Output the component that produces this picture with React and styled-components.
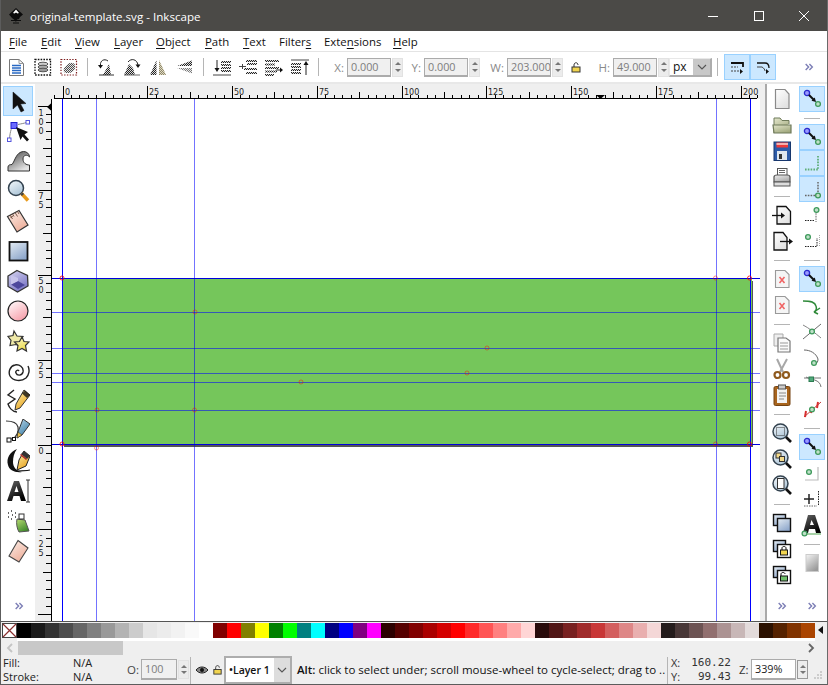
import React from "react";
import styled, { createGlobalStyle } from "styled-components";

const UI = `"Open Sans", "Noto Sans", "Liberation Sans", sans-serif`;

const Global = createGlobalStyle`
  html, body { margin: 0; padding: 0; background: #efefef; }
  #root { width: 828px; height: 685px; overflow: hidden; }
`;

const Window = styled.div`
  width: 828px; height: 685px; box-sizing: border-box; display: flex; flex-direction: column;
  font-family: ${UI}; background: #efefef; color: #111; overflow: hidden;
  border-left: 1px solid #5c5c5c; border-right: 1px solid #6a6a6a; border-bottom: 1px solid #5c5c5c;
`;
const TitleBar = styled.div`
  height: 31px; flex: none; background: #4b4a47; display: flex; align-items: center; color: #fff; padding-left: 7px;
`;
const Title = styled.div`font-size: 11.6px; margin-left: 6px; margin-top: 2px; flex: 1;`;
const WinBtn = styled.div`width: 45.5px; height: 31px; display: flex; align-items: center; justify-content: center;`;
const MenuBar = styled.div`
  height: 21px; flex: none; background: #fff; border-bottom: 1px solid #e4e4e4; box-sizing: border-box;
  display: flex; align-items: center; font-size: 11.4px; padding-left: 8px; color: #111;
`;
const MenuItem = styled.div`width: ${p => p.$w}px; flex: none; u { text-underline-offset: 2px; }`;
const Toolbar = styled.div`
  height: 32px; flex: none; background: #fff; border-bottom: 2px solid #e8e8e8; box-sizing: border-box; display: flex; align-items: center; padding-left: 3px;
`;
const Cell = styled.div`
  width: 26px; height: 26px; flex: none; display: flex; align-items: center; justify-content: center; box-sizing: border-box;
  ${p => p.$on && `background: #cce8ff; border: 1px solid #99d1ff;`}
`;
const VSep = styled.div`
  width: ${p => p.$w}px; flex: none; display: flex; justify-content: center; align-self: center;
  &::after { content: ""; width: 1px; height: 18px; background: #b5b5b5; }
`;
const FieldLabel = styled.div`
  width: ${p => p.$w}px; flex: none; text-align: right; padding-right: 3px; box-sizing: border-box; font-size: 11.5px; color: #8a8a8a;
`;
const NumBox = styled.div`
  width: ${p => p.$w}px; height: ${p => p.$h || 19}px; flex: none; box-sizing: border-box; overflow: hidden; white-space: nowrap;
  background: ${p => p.$white ? "#fff" : "#f0f0f0"}; border: 1px solid #ababab; border-bottom-width: 2px; border-right-width: 1px;
  font-size: 10.8px; color: ${p => p.$white ? "#222" : "#7d7d7d"}; padding-left: 3px; line-height: ${p => (p.$h || 19) - 3}px;
`;
const Spin = styled.div`
  width: 11px; height: 19px; flex: none; margin-left: 1px; background: #ececec; display: flex; flex-direction: column; justify-content: space-around; align-items: center; padding: 2px 0; box-sizing: border-box;
  border: 1px solid ${p => p.$dark ? "#999" : "#e2e2e2"};
`;
const Arrow = styled.div`
  width: 0; height: 0; border-left: 3px solid transparent; border-right: 3px solid transparent;
  ${p => p.$down ? `border-top: 3px solid #777;` : `border-bottom: 3px solid #777;`}
`;
const Gap = styled.div`width: ${p => p.$w}px; flex: none; display: flex; justify-content: center;`;
const Combo = styled.div`
  width: ${p => p.$w}px; height: ${p => p.$h}px; flex: none; box-sizing: border-box; background: #fff; display: flex; align-items: center;
  border: 2px solid #adadad; border-width: ${p => p.$thin ? "1px 2px 2px 1px" : "2px"}; border-color: ${p => p.$thin ? "#e8e8e8 #adadad #adadad #e8e8e8" : "#adadad"};
`;
const ComboText = styled.div`
  flex: 1; padding-left: ${p => p.$pl}px; font-size: ${p => p.$fs}px; font-weight: ${p => p.$b ? 600 : 400}; color: #111; white-space: nowrap;
`;
const ComboDrop = styled.div`
  width: ${p => p.$w}px; align-self: stretch; flex: none; background: ${p => p.$bg}; display: flex; align-items: center; justify-content: center;
`;
const Main = styled.div`height: 537px; flex: none; display: flex;`;
const Toolbox = styled.div`
  width: 34px; flex: none; background: #fff; display: flex; flex-direction: column; padding: 2px 0 0 2px; box-sizing: border-box;
`;
const ToolBtn = styled.div`
  width: 30px; height: 30px; flex: none; box-sizing: border-box; display: flex; align-items: center; justify-content: center;
  ${p => p.$on && `background: #cce8ff; border: 1px solid #99d1ff;`}
`;
const ChevronSlot = styled.div`
  margin-top: auto; height: ${p => p.$h}px; display: flex; align-items: flex-start; justify-content: center; flex: none;
`;
const Workspace = styled.div`width: 730px; flex: none; display: flex; flex-direction: column;`;
const HRuler = styled.svg`width: 730px; height: 15px; flex: none; display: block; background: #efefef;`;
const WorkBody = styled.div`flex: 1; min-height: 0; display: flex;`;
const VRuler = styled.svg`width: 17px; height: 522px; flex: none; display: block; background: #efefef;`;
const Canvas = styled.svg`width: 708px; height: 522px; flex: none; display: block; background: #fff;`;
const Strip = styled.div`width: 5px; flex: none; background: #efefef;`;
const Dock = styled.div`
  flex: 1; background: #fff; border-left: 2px solid #a9a9a9; display: flex; padding-top: 2px; box-sizing: border-box;
`;
const DockCol = styled.div`width: 30px; display: flex; flex-direction: column; align-items: center; flex: none;`;
const HSep = styled.div`
  height: 12px; width: 100%; flex: none; display: flex; align-items: center; justify-content: center;
  &::after { content: ""; width: 16px; height: 1px; background: #b5b5b5; }
`;
const Palette = styled.div`
  height: 20px; flex: none; display: flex; background: #efefef; border-top: 1px solid #555; box-sizing: border-box; padding: 1px 0 0 1px; align-items: flex-start;
`;
const SwatchRow = styled.div`display: flex; width: 798px; border-bottom: 3px solid #fff; flex: none;`;
const Swatch = styled.div`width: 14px; height: 15px; flex: none; background: ${p => p.$c};`;
const NoSwatch = styled.svg`width: 15px; height: 15px; flex: none; display: block;`;
const PalArrow = styled.div`
  margin: 3px 0 0 3px; width: 0; height: 0; border-top: 4px solid transparent; border-bottom: 4px solid transparent; border-right: 5px solid #111;
`;
const ScrollRow = styled.div`height: 14px; flex: none; display: flex; align-items: center; background: #efefef;`;
const ScrollBtn = styled.div`width: ${p => p.$w}px; flex: none; display: flex; justify-content: center;`;
const Thumb = styled.div`width: 105px; height: 14px; flex: none; background: #c8c8c8;`;
const Status = styled.div`height: 29px; flex: none; display: flex; align-items: center; background: #efefef; font-size: 11.5px;`;
const FillGrid = styled.div`
  width: 122px; flex: none; display: grid; grid-template-columns: 70px auto; row-gap: 1px; padding-left: 2px; box-sizing: border-box; line-height: 13px; font-size: 11px; color: #222;
`;
const OLabel = styled.div`width: 14px; flex: none; color: #444; font-size: 11.5px;`;
const StatusSep = styled.div`width: 1px; align-self: stretch; background: #b5b5b5; flex: none; margin: ${p => p.$m};`;
const Hint = styled.div`width: 369px; flex: none; font-size: 11.5px; white-space: nowrap; color: #111; b { font-weight: 600; }`;
const Coords = styled.div`
  width: 68px; flex: none; display: grid; grid-template-columns: 19px auto; line-height: 14px; font-size: 11px; color: #333;
`;
const Mono = styled.div`font-family: "DejaVu Sans Mono", monospace; font-size: 11px; text-align: right; padding-right: 8px;`;
const ZLabel = styled.div`width: 12px; flex: none; font-size: 11.5px; color: #333;`;
const Grip = styled.svg`width: 12px; height: 12px; flex: none; margin: 10px 0 0 4px; display: block;`;
const Ic = styled.svg`display: block; flex: none; width: ${p => p.$s || 24}px; height: ${p => p.$s || 24}px;`;
const Defs = styled.svg`width: 0; height: 0; flex: none; display: block;`;

const Chev = () => (
  <Ic $s={10} viewBox="0 0 12 12" fill="none" stroke="#7d7fb6" strokeWidth="1.7">
    <path d="M2 2.5 5.5 6 2 9.5M6.5 2.5 10 6 6.5 9.5" />
  </Ic>
);

const D = "url(#dith)";
const ringG = (x, y) => <circle cx={x} cy={y} r="2.4" fill="#bfe0c8" stroke="#3f9a5c" strokeWidth="1.3" />;
const ringB = (x, y) => <circle cx={x} cy={y} r="2.6" fill="#9a9aff" stroke="#2a2acc" strokeWidth="1.3" />;
const snapArrow = (
  <>
    {ringB(7, 6)}
    {ringG(18, 17)}
    <path d="M9 8 14 13" stroke="#111" strokeWidth="2" />
    <path d="M16 15 11.5 13.8 14.8 10.5Z" fill="#111" />
  </>
);
const lens = (
  <>
    <circle cx="10.5" cy="10.5" r="7.5" fill="url(#gLens)" stroke="#33424f" strokeWidth="1.5" />
    <path d="M16 16 21 21" stroke="#111" strokeWidth="2.6" />
  </>
);
const stackBack = <rect x="3.5" y="3.5" width="12" height="11" fill="url(#gBlue)" stroke="#111" strokeWidth="1.4" />;

const icons = {
  /* top bar */
  docprops: <><path d="M4.5 4.5H14l4.5 4V20.5h-14Z" fill="#fff" stroke="#777" /><path d="M14 4.500v4h4.500" fill="none" stroke="#999" /><path d="M7 10.500h9M7 13h9M7 15.500h9M7 18h9" stroke="#2869c4" strokeWidth="1.400" /></>,
  group: <><rect x="4" y="4.500" width="15.500" height="15.500" fill="none" stroke="#111" strokeWidth="1.300" strokeDasharray="1.600 1.200" /><ellipse cx="12" cy="9" rx="5" ry="1.800" fill="#ccc" stroke="#555" /><ellipse cx="12" cy="12" rx="5" ry="1.800" fill="#aaa" stroke="#555" /><ellipse cx="12" cy="15" rx="5" ry="1.800" fill="#999" stroke="#555" /></>,
  selall: <><rect x="4" y="4.500" width="15.500" height="15.500" fill="none" stroke="#7c1c1c" strokeWidth="1.200" strokeDasharray="1.400 1.400" /><path d="M7 17c-1-4 1-5 3-7 2-3 7-3 8 0 1 4-2 8-6 8-2 0-4 0-5-1Z" fill={D} opacity=".8" /></>,
  rotl: <><path d="M9 20 15 9l2 11Z" fill={D} /><path d="M5 20h15" stroke="#333" strokeWidth="1" /><path d="M14 6C10 3 6 6 6.500 10" fill="none" stroke="#222" strokeWidth="1" /><path d="M4 10h5l-2.500 3.500Z" fill="#111" /></>,
  rotr: <><path d="M4 20 9 9l4 4 2 7Z" fill={D} /><path d="M4 20h16" stroke="#666" /><path d="M8 7c3-4 9-3 10 3" fill="none" stroke="#222" strokeWidth="1" /><path d="M15.500 9.500h5L18 13Z" fill="#111" /></>,
  fliph: <><path d="M10.500 5v15H4Z" fill={D} /><path d="M13 5v15h7Z" fill="#e2d7a8" /><path d="M13 5v15h7Z" fill={D} opacity=".45" /></>,
  flipv: <><path d="M20 5.500V11H5Z" fill={D} /><path d="M20 18.500V13H5Z" fill={D} opacity=".6" /></>,
  al1: <><path d="M11 7h10M11 10h10M11 13h10M11 16h10" stroke={D} strokeWidth="2" /><path d="M7 5v9" stroke="#222" /><path d="M4.500 13h5L7 17Z" fill="#111" /><path d="M3 20h18" stroke="#444" /></>,
  al2: <><path d="M10 6h11M11 9h10M8 14h13M10 18h11" stroke={D} strokeWidth="2.200" /><path d="M3 11.500h7M6.500 9v5" stroke="#444" /></>,
  al3: <><path d="M3 6h14M3 9.500h10M3 13h14M3 16.500h12M3 20h9" stroke={D} strokeWidth="2" /><path d="M14 15h5" stroke="#222" /><path d="M18 12.500v5l3-2.500Z" fill="#111" /></>,
  al4: <><path d="M3 5h18" stroke="#444" /><path d="M3 9h10M3 12h10M3 15h10M3 18h10" stroke={D} strokeWidth="2" /><path d="M18 9v11" stroke="#222" /><path d="M15.500 10h5L18 6Z" fill="#111" /></>,
  tog1: <><path d="M6 8h12v4" fill="none" stroke="#111" strokeWidth="1.800" /><path d="M6 12h7M6 16h8" stroke="#444" strokeWidth="1" strokeDasharray="2 1" /><path d="M15 14v5l3-2.500Z" fill="#111" /></>,
  tog2: <><path d="M6 8h8c3 0 4 2 4 5" fill="none" stroke="#111" strokeWidth="1.300" /><path d="M6 12h5c2 1 3 3 3 4" fill="none" stroke="#444" /><path d="M15 14v5l3-2.500Z" fill="#111" /></>,
  /* toolbox */
  select: <path d="M7 3v17l4.500-4 3.500 7 3-1.600L14.500 15l5.500-.5Z" fill="#111" stroke="#111" strokeWidth=".5" />,
  node: <><path d="M3.500 20C4 12 6 7 8 6.500M12 5.500c4-1 6-1 8-2" fill="none" stroke="#888" strokeWidth="1" /><rect x="5" y="3.500" width="6" height="6" fill="#6b6bff" stroke="#2222cc" /><rect x="20" y="1.500" width="3.500" height="3.500" fill="#fff" stroke="#5555dd" /><rect x="1.500" y="19" width="3.500" height="3.500" fill="#fff" stroke="#5555dd" /><path d="M10 8 22 13 18.500 15.500 23 20.500 21 22.500 16.500 17.500 14.500 21Z" fill="#111" /></>,
  tweak: <path d="M2 22v-4c0-2 2-2.500 4-2.500C9 12 10 3 17.500 2.500 21 2.500 23.500 5 23.500 8 21 5 17 6 17 10c0 4 3 6 6.500 6v6Z" fill="url(#gWave)" stroke="#333" strokeWidth="1" />,
  zoom: <><circle cx="10" cy="9" r="7.500" fill="url(#gLens)" stroke="#33424f" strokeWidth="1.500" /><path d="M15.500 14.500 22 21.500" stroke="#e89b1c" strokeWidth="3.500" /><path d="M15.500 14.500 17 16" stroke="#444" strokeWidth="3" /></>,
  measure: <><path d="M1.500 7.500 13 1.500l9 14.500-11 7Z" fill="url(#gEraser)" stroke="#333" strokeWidth="1.200" /><path d="M4 6 6.500 10M6.500 4.800 8 7.500M9 3.500l2.500 4M11.500 2.500 13 5M4.500 8.500 7 7" stroke="#6b4a3a" strokeWidth=".9" /></>,
  rect: <rect x="3.500" y="3" width="18" height="18.500" fill="url(#gBlue)" stroke="#111" strokeWidth="1.800" />,
  box3d: <><path d="M11 1.500 21.500 6.500 22 17 11.500 23 2 17.500V7Z" fill="url(#gCube)" stroke="#333" strokeWidth="1.300" /><path d="M5 15.500 12 12l7 4-7 4Z" fill="#403a92" opacity=".85" /><path d="M5 6l7 3v3l-7 3.500Z" fill="#c7c4ea" /></>,
  circle: <circle cx="12" cy="12" r="10" fill="url(#gPink)" stroke="#222" strokeWidth="1.200" />,
  star: <><path d="M8 2 11 7l6 .5-3 5 1 5-5-2-6 1 1-5-3-4 5-1Z" fill="#efe9a8" stroke="#333" strokeWidth="1.200" /><path d="M16 8l2 4.500 5 .5-3.500 3.500 1 5.500-4.500-2.500-5 2.500 1-5.500-3.500-3.500 5-.5Z" fill="url(#gStar)" stroke="#333" strokeWidth="1.200" /></>,
  spiral: <path d="M13 12c-1-2-4 0-3 2 1 3 6 3 7-1 1-5-4-8-8-7-5 1-7 7-5 11 3 5 11 6 16 2 3-3 4-8 2-12" fill="none" stroke="#222" strokeWidth="1.400" />,
  pencil: <><path d="M8 1 2 6l7 4-7 5c1 3 4 8 9 8" fill="none" stroke="#222" strokeWidth="1.400" /><path d="M18 1l6 5-10 13-5 2 1-6Z" fill="url(#gYellow)" stroke="#333" /><path d="M19 1.500 24 6l-3 3-5-4.500Z" fill="#111" opacity=".8" /></>,
  pen: <><path d="M0 2c8 0 11 2 12 6s-1 10-6 12H4" fill="none" stroke="#333" strokeWidth="1.200" /><rect x="1" y="19" width="4" height="4" fill="#fff" stroke="#111" /><rect x="6.500" y="18.500" width="3" height="3" fill="#fff" stroke="#111" /><path d="M17 0l7 5-8 11-5 3 1-6Z" fill="url(#gPenBlue)" stroke="#333" /><path d="M12 13l4 3-5 3Z" fill="#e8c04a" stroke="#333" strokeWidth=".6" /></>,
  callig: <><path d="M11 0C4 3 0 9 2 16c1 5 7 8 14 7-6-1-9-5-9-10 0-5 1-9 4-13Z" fill="#111" /><path d="M10 22c4 0 9 0 14-1" stroke="#111" strokeWidth="1.200" /><path d="M18 2l6 5-4 10-9 4 2-10Z" fill="url(#gYellow)" stroke="#222" /><path d="M18 2l6 5-3 3-6-5Z" fill="#333" /><path d="M15 5l6 5-1 1-6-5Z" fill="#b02a2a" /></>,
  text: <><path d="M8 2h5l7 20h-5l-1.500-5H7.500L6 22H1Zm2.500 5L8.500 13h4Z" fill="url(#gText)" /><path d="M20 1h4M22 1v22M20 23h4" fill="none" stroke="#333" strokeWidth="1" /></>,
  spray: <><path d="M2 4h1M5 2h1M2 8h1M6 6h1M9 4h1M5 10h1M9 8h1" stroke="#333" strokeWidth="1.500" /><path d="M11 10l8 1 4 11-10 1c-2-3-3-9-2-13Z" fill="url(#gGreen)" stroke="#555" /><rect x="13" y="5" width="5" height="5" fill="#fff" stroke="#333" /></>,
  eraser: <path d="M12 1.500l10 7.500-9 14-10-6Z" fill="url(#gEraser)" stroke="#444" strokeWidth="1.100" />,
  /* dock 1 */
  new: <path d="M5.500 2.500H15l4 4.500V21.500H5.500Z" fill="url(#gDoc)" stroke="#8a8a8a" strokeWidth="1.200" />,
  open: <><path d="M4 20V5h6l2 2.500h7V11" fill="url(#gFolder)" stroke="#6f7a5a" /><path d="M4 20 3 12h18v8Z" fill="url(#gFolder)" stroke="#6f7a5a" strokeWidth="1.200" /></>,
  save: <><rect x="4" y="3" width="16.500" height="18.500" fill="#2d5ba8" stroke="#17376e" /><rect x="6.500" y="3.500" width="11.500" height="5" fill="#ee3a3a" /><rect x="6.500" y="4" width="11.500" height="2" fill="#f2b0b0" /><rect x="7" y="12" width="10" height="9" fill="#dfe6ee" /><rect x="9" y="15" width="3" height="5" fill="#333" /></>,
  print: <><rect x="7.500" y="3.500" width="9.500" height="7" fill="#fff" stroke="#555" /><path d="M9 5.500h6M9 7.500h6" stroke="#666" /><path d="M4 12c0-1 1-2 3-2h10c2 0 3 1 3 2v5H4Z" fill="url(#gGrayDoc)" stroke="#555" strokeWidth="1.200" /><rect x="4" y="17" width="16" height="4" fill="#ddd" stroke="#555" /></>,
  import: <><path d="M7 3.500h9l4.500 5V21H7Z" fill="url(#gDoc)" stroke="#111" strokeWidth="1.300" /><path d="M2 12.500h11" stroke="#111" strokeWidth="1.300" /><path d="M11 9.500v6l4-3Z" fill="#111" /></>,
  export: <><path d="M4 3.500h9l4 5V21H4Z" fill="url(#gDoc)" stroke="#111" strokeWidth="1.300" /><path d="M10 12.500h10" stroke="#111" strokeWidth="1.300" /><path d="M19 9.500v6l4-3Z" fill="#111" /></>,
  undo: <><path d="M5.500 3.500H15l4 4V20.500H5.500Z" fill="#f5f5f5" stroke="#999" strokeWidth="1.100" /><path d="M9.500 10l5 6M14.500 10l-5 6" stroke="#f06565" strokeWidth="1.600" /></>,
  copy: <><path d="M4 3h9v12H4Z" fill="#eee" stroke="#aaa" /><path d="M8 7h8l4 3v11H8Z" fill="#fafafa" stroke="#777" strokeWidth="1.200" /><path d="M10 12h8M10 15h8M10 18h8" stroke="#999" /></>,
  cut: <><path d="M7 2l6 13M17 2 10 15" stroke="#a8a8a8" strokeWidth="2" /><circle cx="7.500" cy="18" r="3" fill="none" stroke="#8f5a1d" strokeWidth="2.200" /><circle cx="16" cy="18" r="3" fill="none" stroke="#8f5a1d" strokeWidth="2.200" /></>,
  paste: <><rect x="4" y="3.500" width="16" height="19" rx="1.500" fill="#a8641d" stroke="#744312" /><path d="M7 6h10v14H7Z" fill="#f2f2f2" /><rect x="8.500" y="2" width="7" height="4" fill="#ccc" stroke="#555" /><path d="M9 10h7M9 13h7M9 16h5" stroke="#888" /></>,
  zs: <>{lens}<rect x="6.500" y="6.500" width="8" height="8" fill="none" stroke="#333" strokeDasharray="1 1" /></>,
  zd: <>{lens}<rect x="6" y="6" width="5" height="5" fill="#f2d98a" stroke="#333" /><rect x="9.500" y="9.500" width="5" height="5" fill="#f2d98a" stroke="#333" /></>,
  zp: <>{lens}<rect x="7.500" y="5.500" width="6.500" height="10" fill="#fff" stroke="#333" /></>,
  dup: <>{stackBack}<rect x="7.500" y="7.500" width="13" height="13" fill="url(#gBlue)" stroke="#111" strokeWidth="1.400" /></>,
  clone: <>{stackBack}<rect x="7.500" y="7.500" width="13" height="13" fill="#fff" stroke="#111" strokeWidth="1.400" /><rect x="10.500" y="13" width="7" height="5" fill="#f1d44f" stroke="#111" /><path d="M12 13v-2c0-2 4-2 4 0v2" fill="none" stroke="#111" /></>,
  unlink: <>{stackBack}<rect x="7.500" y="7.500" width="13" height="13" fill="#fff" stroke="#111" strokeWidth="1.400" /><rect x="10.500" y="13" width="7" height="5" fill="#6fbf6a" stroke="#111" /><path d="M11 13v-2c0-2 4-2 4 0" fill="none" stroke="#111" /></>,
  /* dock 2 */
  snap: snapArrow,
  sgreen: <path d="M18 5v14M5 18.500h13" stroke="#5fae78" strokeWidth="1.800" strokeDasharray="1.600 1.200" fill="none" />,
  sgray: <><path d="M18 5v11M5 18.500h11" stroke="#666" strokeWidth="1.500" strokeDasharray="1.600 1.200" fill="none" />{ringG(18, 18.500)}</>,
  s1: <><path d="M5 17.500h10" stroke="#222" strokeDasharray="1.500 1" /><path d="M16 5v14" stroke="#999" strokeWidth="1.500" strokeDasharray="1.600 1" />{ringG(16.500, 7)}</>,
  s2: <><path d="M5 17.500h12V9" fill="none" stroke="#222" strokeDasharray="1.500 1" /><path d="M19.500 6v11" stroke="#aaa" strokeDasharray="1 1" />{ringG(8, 8)}</>,
  s3: <><path d="M3 8c8 0 12 1 13 5 1 3 0 5-2 6" fill="none" stroke="#2f8a3a" strokeWidth="1.500" /><path d="M14 19l6-4M14 19l4 2" stroke="#2f8a3a" strokeWidth="1.500" /></>,
  s4: <><path d="M3 20 21 5" stroke="#444" strokeWidth=".8" /><path d="M3 6c6 3 12 8 18 13" stroke="#777" fill="none" strokeWidth=".9" />{ringG(12, 12.500)}</>,
  s5: <><path d="M4 5c6 0 12 3 14 9 0 3-1 4-3 5" fill="none" stroke="#666" />{ringG(14, 18)}</>,
  s6: <><path d="M4 7c5 0 12 0 17 0M6 6c5 3 14 2 15 10" fill="none" stroke="#777" /><rect x="9" y="6" width="4.500" height="4.500" fill="#50a97a" stroke="#2d7c52" /></>,
  s7: <><path d="M4 20 21 5" stroke="#c33a3a" strokeWidth="1" /><path d="M6 14 5 20M12 10l-1 6M18 5l-1 6" stroke="#d62f2f" strokeWidth="2" />{ringG(12, 12.500)}</>,
  s8: <>{ringG(9, 11)}<path d="M5 19h13V6" fill="none" stroke="#bbb" strokeWidth="1.200" /></>,
  s9: <><path d="M4 12h10M9 7v10" stroke="#222" strokeWidth="1.500" /><path d="M4 19h13" stroke="#666" strokeDasharray="1.500 1" /><path d="M18.500 4v15" stroke="#222" strokeDasharray="1.500 1" /></>,
  s10: <><path d="M8 2h7l6 18h-5l-1-4H9l-1 4H3Zm3.500 5L10 12h4Z" fill="url(#gText)" /><path d="M5 21h16" stroke="#6bb36b" strokeWidth="1.200" />{ringG(4.500, 20.500)}</>,
  s11: <rect x="6" y="3.500" width="12.500" height="17" fill="url(#gSquare)" stroke="#ccc" />,
};
const Icon = ({ n }) => <Ic viewBox="0 0 24 24">{icons[n]}</Ic>;

const menus = [["F", "ile", 32], ["E", "dit", 34], ["V", "iew", 39], ["L", "ayer", 42], ["O", "bject", 49], ["P", "ath", 38], ["T", "ext", 36], ["Filter", "s", 45, true], ["Exte", "nsions", 69, "m"], ["H", "elp", 30]];
const toolboxIcons = ["select", "node", "tweak", "zoom", "measure", "rect", "box3d", "circle", "star", "spiral", "pencil", "pen", "callig", "text", "spray", "eraser"];
const dock1 = ["new", "open", "save", "print", 0, "import", "export", 0, "undo", "undo", 0, "copy", "cut", "paste", 0, "zs", "zd", "zp", 0, "dup", "clone", "unlink"];
const dock2 = ["snap+", 0, "snap+", "sgreen+", "sgray+", "s1", "s2", 0, "snap+", "s3", "s4", "s5", "s6", "s7", 0, "snap+", "s8", "s9", "s10", 0, "s11"];
const greys = ["#000", "#1a1a1a", "#333", "#4d4d4d", "#666", "#808080", "#999", "#b3b3b3", "#ccc", "#e6e6e6", "#ececec", "#f2f2f2", "#f9f9f9", "#fff"];
const basics = ["#800000", "#f00", "#808000", "#ff0", "#008000", "#0f0", "#008080", "#0ff", "#000080", "#00f", "#800080", "#f0f"];
const reds = ["#2b0000", "#500", "#800000", "#a00", "#d40000", "#f00", "#ff2a2a", "#f55", "#ff8080", "#faa", "#ffd5d5", "#280b0b", "#501616", "#782121", "#a02c2c", "#c83737", "#d35f5f", "#de8787", "#e9afaf", "#f4d7d7", "#241c1c", "#483737", "#6c5353", "#916f6f", "#ac9393", "#c8b7b7", "#e3dbdb", "#2b1100", "#520", "#803300", "#a40"];

const hLabels = [[0, "0"], [25, "25"], [50, "50"], [75, "75"], [100, "100"], [125, "125"], [150, "150"], [175, "175"], [200, "200"]];
const hx = u => 62.5 + u * 3.39;
const HRulerDraw = () => {
  const ticks = [];
  for (let u = -2.5; u <= 205; u += 2.5) {
    const x = Math.round(hx(u)) + 0.5;
    const major = u % 25 === 0;
    const mid = u % 12.5 === 0;
    ticks.push(<path key={u} d={`M${x} ${major ? 86 : mid ? 92 : 95}V98`} stroke="#000" />);
  }
  return (
    <HRuler viewBox="35 84 730 15">
      <path d="M54 98.500H757" stroke="#000" />
      {ticks}
      {hLabels.map(([u, t]) => (
        <text key={u} x={Math.round(hx(u)) + 2} y="94.500" fontFamily="DejaVu Sans, sans-serif" fontSize="8" fill="#222">{t}</text>
      ))}
      <path d="M596 95h9l-4.500 4Z" fill="#000" />
    </HRuler>
  );
};
const vLabels = [[100, ["1", "0", "0"]], [75, ["7", "5"]], [50, ["5", "0"]], [25, ["2", "5"]], [0, ["0"]], [-25, ["-", "2", "5"]]];
const vy = u => 444.5 - u * 3.39;
const VRulerDraw = () => {
  const ticks = [];
  for (let u = 102.5; u >= -52.5; u -= 2.5) {
    const y = Math.round(vy(u)) + 0.5;
    const major = u % 25 === 0;
    const mid = u % 12.5 === 0;
    ticks.push(<path key={u} d={`M${major ? 38 : mid ? 43 : 46} ${y}H51`} stroke="#000" />);
  }
  return (
    <VRuler viewBox="35 99 17 522">
      <path d="M51.500 99V621" stroke="#000" />
      {ticks}
      {vLabels.map(([u, ds]) => ds.map((d, i) => (
        <text key={u + "-" + i} x="41" y={vy(u) + 9 + i * 9 + (u === 100 ? 1 : 0)} textAnchor="middle" fontFamily="DejaVu Sans, sans-serif" fontSize="8" fill="#222">{d}</text>
      )))}
      <path d="M47 107l5-4.500v9Z" fill="#000" />
    </VRuler>
  );
};

const strongV = [62.5, 750.5];
const softV = [96.5, 194.5, 716.5];
const softH = [312.5, 348.5, 373.5, 382.5, 410.5];
const strongH = [278.5, 444.5];
const marks = [[62, 278, 1], [715.5, 278, 0], [749.5, 278, 1], [195, 312, 0], [487, 348, 0], [467, 373, 0], [301, 382, 0], [97, 410, 0], [194.5, 410, 0], [62, 444, 1], [96.5, 448, 0], [715.5, 444, 0], [749.5, 444, 1]];

const CanvasDraw = () => (
  <Canvas viewBox="52 99 708 522">
    <rect x="64" y="281" width="689" height="166" fill="#555" />
    <rect x="63" y="279" width="689" height="166" fill="#75c65b" />
    {softV.map(x => <path key={x} d={`M${x} 99V621`} stroke="#0000ff" strokeOpacity=".55" />)}
    {softH.map(y => <path key={y} d={`M52 ${y}H760`} stroke="#0000ff" strokeOpacity=".55" />)}
    {strongV.map(x => <path key={x} d={`M${x} 99V621`} stroke="#0000ff" />)}
    {strongH.map(y => <path key={y} d={`M52 ${y}H760`} stroke="#0000dd" />)}
    {marks.map(([x, y, s], i) => (
      <circle key={i} cx={x} cy={y} r="2" fill="none" stroke="#ff0000" strokeOpacity={s ? 0.8 : 0.42} strokeWidth="1" />
    ))}
  </Canvas>
);

const Field = ({ label, lw, value }) => (
  <>
    <FieldLabel $w={lw}>{label}</FieldLabel>
    <NumBox $w={44}>{value}</NumBox>
    <Spin><Arrow /><Arrow $down /></Spin>
  </>
);

const Caret = () => (
  <Ic $s={10} viewBox="0 0 10 10" fill="none" stroke="#555" strokeWidth="1.100"><path d="M1 3 5 7 9 3" /></Ic>
);

const renderDock = list => list.map((it, i) => {
  if (it === 0) return <HSep key={i} />;
  const on = it.endsWith("+");
  return <Cell key={i} $on={on}><Icon n={on ? it.slice(0, -1) : it} /></Cell>;
});

export default function App() {
  return (
    <Window>
      <Global />
      <Defs>
        <defs>
          <pattern id="dith" width="2" height="2" patternUnits="userSpaceOnUse">
            <rect width="2" height="2" fill="#ddd" /><rect width="1" height="1" fill="#222" /><rect x="1" y="1" width="1" height="1" fill="#222" />
          </pattern>
          {[
            ["gBlue", "#e4ecf3", "#8fa8cc"], ["gDoc", "#fff", "#e2e2e2"], ["gLens", "#f5f9fc", "#aec6d8"], ["gWave", "#444", "#e4e4e4"],
            ["gCube", "#d8d6f0", "#7a76c6"], ["gStar", "#fffbd0", "#e9d94b"], ["gYellow", "#fff4b0", "#e8a422"], ["gPenBlue", "#bcd6e8", "#3a7fa8"],
            ["gText", "#666", "#000"], ["gGreen", "#b9dc73", "#3f8a2a"], ["gEraser", "#fbeee8", "#eeb09c"], ["gFolder", "#e3e6cb", "#a2a97f"],
            ["gGrayDoc", "#eee", "#aaa"], ["gPink", "#fff", "#f7a3ae"], ["gSquare", "#f4f4f4", "#9a9a9a"],
          ].map(([id, a, b]) => (
            <linearGradient key={id} id={id} x1="0" y1="0" x2=".6" y2="1">
              <stop offset="0" stopColor={a} /><stop offset="1" stopColor={b} />
            </linearGradient>
          ))}
        </defs>
      </Defs>

      <TitleBar>
        <Ic $s={16} viewBox="0 0 16 16">
          <path d="M8 0 15 6.500 12 9l-1 2-2 .5-1 2.500-2-2.500-2-1.500L1 6.500Z" fill="#0c0c0c" />
          <path d="M8 1.500 5 5l1.500.5L8 4.500 9.500 5.500 11 5Z" fill="#fff" />
          <path d="M3 12h10v1H3ZM5 14.500h6v1H5Z" fill="#0c0c0c" />
        </Ic>
        <Title>original-template.svg - Inkscape</Title>
        <WinBtn><Ic $s={12} viewBox="0 0 12 12"><path d="M1 6.500H11" stroke="#fff" /></Ic></WinBtn>
        <WinBtn><Ic $s={12} viewBox="0 0 12 12"><rect x="1.500" y="1.500" width="9" height="9" fill="none" stroke="#fff" /></Ic></WinBtn>
        <WinBtn><Ic $s={12} viewBox="0 0 12 12"><path d="M1 1 11 11M11 1 1 11" stroke="#fff" /></Ic></WinBtn>
      </TitleBar>

      <MenuBar>
        {menus.map(([a, b, w, m]) => (
          <MenuItem key={a} $w={w}>
            {m === true ? <>{a}<u>{b}</u></> : m === "m" ? <>{a}<u>n</u>sions</> : <><u>{a}</u>{b}</>}
          </MenuItem>
        ))}
      </MenuBar>

      <Toolbar>
        <Cell><Icon n="docprops" /></Cell><Cell><Icon n="group" /></Cell><Cell><Icon n="selall" /></Cell>
        <VSep $w={11} />
        <Cell><Icon n="rotl" /></Cell><Cell><Icon n="rotr" /></Cell><Cell><Icon n="fliph" /></Cell><Cell><Icon n="flipv" /></Cell>
        <VSep $w={12} />
        <Cell><Icon n="al1" /></Cell><Cell><Icon n="al2" /></Cell><Cell><Icon n="al3" /></Cell><Cell><Icon n="al4" /></Cell>
        <VSep $w={10} />
        <Field label="X:" lw={24} value="0.000" />
        <Field label="Y:" lw={21} value="0.000" />
        <Field label="W:" lw={27} value="203.000" />
        <Gap $w={25}><Ic $s={12} viewBox="0 0 12 12"><rect x="2" y="6" width="8" height="5" fill="#f1d44f" stroke="#333" /><path d="M4 6V4c0-3 4-3 4 0" fill="none" stroke="#333" /></Ic></Gap>
        <FieldLabel $w={25}>H:</FieldLabel>
        <NumBox $w={44}>49.000</NumBox>
        <Spin><Arrow /><Arrow $down /></Spin>
        <Combo $w={43} $h={19} $thin>
          <ComboText $pl={3} $fs={12}>px</ComboText>
          <ComboDrop $w={17} $bg="#c8c8c8"><Caret /></ComboDrop>
        </Combo>
        <VSep $w={11} />
        <Gap $w={1} />
        <Cell $on><Icon n="tog1" /></Cell>
        <Cell $on><Icon n="tog2" /></Cell>
        <Gap $w={28} />
        <Chev />
      </Toolbar>

      <Main>
        <Toolbox>
          {toolboxIcons.map((n, i) => <ToolBtn key={n} $on={i === 0}><Icon n={n} /></ToolBtn>)}
          <ChevronSlot $h={20}><Chev /></ChevronSlot>
        </Toolbox>
        <Workspace>
          <HRulerDraw />
          <WorkBody>
            <VRulerDraw />
            <CanvasDraw />
            <Strip />
          </WorkBody>
        </Workspace>
        <Dock>
          <DockCol>{renderDock(dock1)}<ChevronSlot $h={20}><Chev /></ChevronSlot></DockCol>
          <DockCol>{renderDock(dock2)}<ChevronSlot $h={20}><Chev /></ChevronSlot></DockCol>
        </Dock>
      </Main>

      <Palette>
        <NoSwatch viewBox="0 0 15 15">
          <rect x=".5" y=".5" width="14" height="14" fill="#fff" stroke="#444" />
          <path d="M1 1 14 14M14 1 1 14" stroke="#8a2f2f" strokeWidth="1.200" />
        </NoSwatch>
        <SwatchRow>
          {[...greys, ...basics, ...reds].map((c, i) => <Swatch key={i} $c={c} />)}
        </SwatchRow>
        <PalArrow />
      </Palette>

      <ScrollRow>
        <ScrollBtn $w={17}><Ic $s={10} viewBox="0 0 10 10" fill="none" stroke="#c4c4c4" strokeWidth="1.800"><path d="M7 1 3 5l4 4" /></Ic></ScrollBtn>
        <Thumb />
        <Gap $w={681} />
        <ScrollBtn $w={14}><Ic $s={10} viewBox="0 0 10 10" fill="none" stroke="#666" strokeWidth="1.800"><path d="M3 1l4 4-4 4" /></Ic></ScrollBtn>
      </ScrollRow>

      <Status>
        <FillGrid><span>Fill:</span><span>N/A</span><span>Stroke:</span><span>N/A</span></FillGrid>
        <Gap $w={4} />
        <OLabel>O:</OLabel>
        <NumBox $w={36} $h={21}>100</NumBox>
        <Spin><Arrow /><Arrow $down /></Spin>
        <StatusSep $m="2px 1px 0 1px" />
        <Gap $w={20}><Ic $s={12} viewBox="0 0 12 12"><path d="M0 6c3-4 9-4 12 0-3 4-9 4-12 0Z" fill="#888" stroke="#222" /><circle cx="6" cy="6" r="2" fill="#111" /></Ic></Gap>
        <Gap $w={11}><Ic $s={11} viewBox="0 0 12 12"><rect x="2" y="6" width="8" height="5" fill="#f1d44f" stroke="#333" /><path d="M4 6V4c0-3 4-3 4 0" fill="none" stroke="#333" /></Ic></Gap>
        <Gap $w={1} />
        <Combo $w={68} $h={28}>
          <ComboText $pl={3} $fs={10.500} $b>•Layer 1</ComboText>
          <ComboDrop $w={16} $bg="#ddd"><Caret /></ComboDrop>
        </Combo>
        <Gap $w={5} />
        <Hint><b>Alt:</b> click to select under; scroll mouse-wheel to cycle-select; drag to ..</Hint>
        <StatusSep $m="2px 3px 0 1px" />
        <Coords>
          <span>X:</span><Mono>160.22</Mono>
          <span>Y:</span><Mono>99.43</Mono>
        </Coords>
        <ZLabel>Z:</ZLabel>
        <NumBox $w={45} $h={21} $white>339%</NumBox>
        <Spin $dark><Arrow /><Arrow $down /></Spin>
        <Grip viewBox="0 0 12 12"><path d="M8 2h2v2H8ZM5 5h2v2H5ZM8 5h2v2H8ZM2 8h2v2H2ZM5 8h2v2H5ZM8 8h2v2H8Z" fill="#ccc" /></Grip>
      </Status>
    </Window>
  );
}
